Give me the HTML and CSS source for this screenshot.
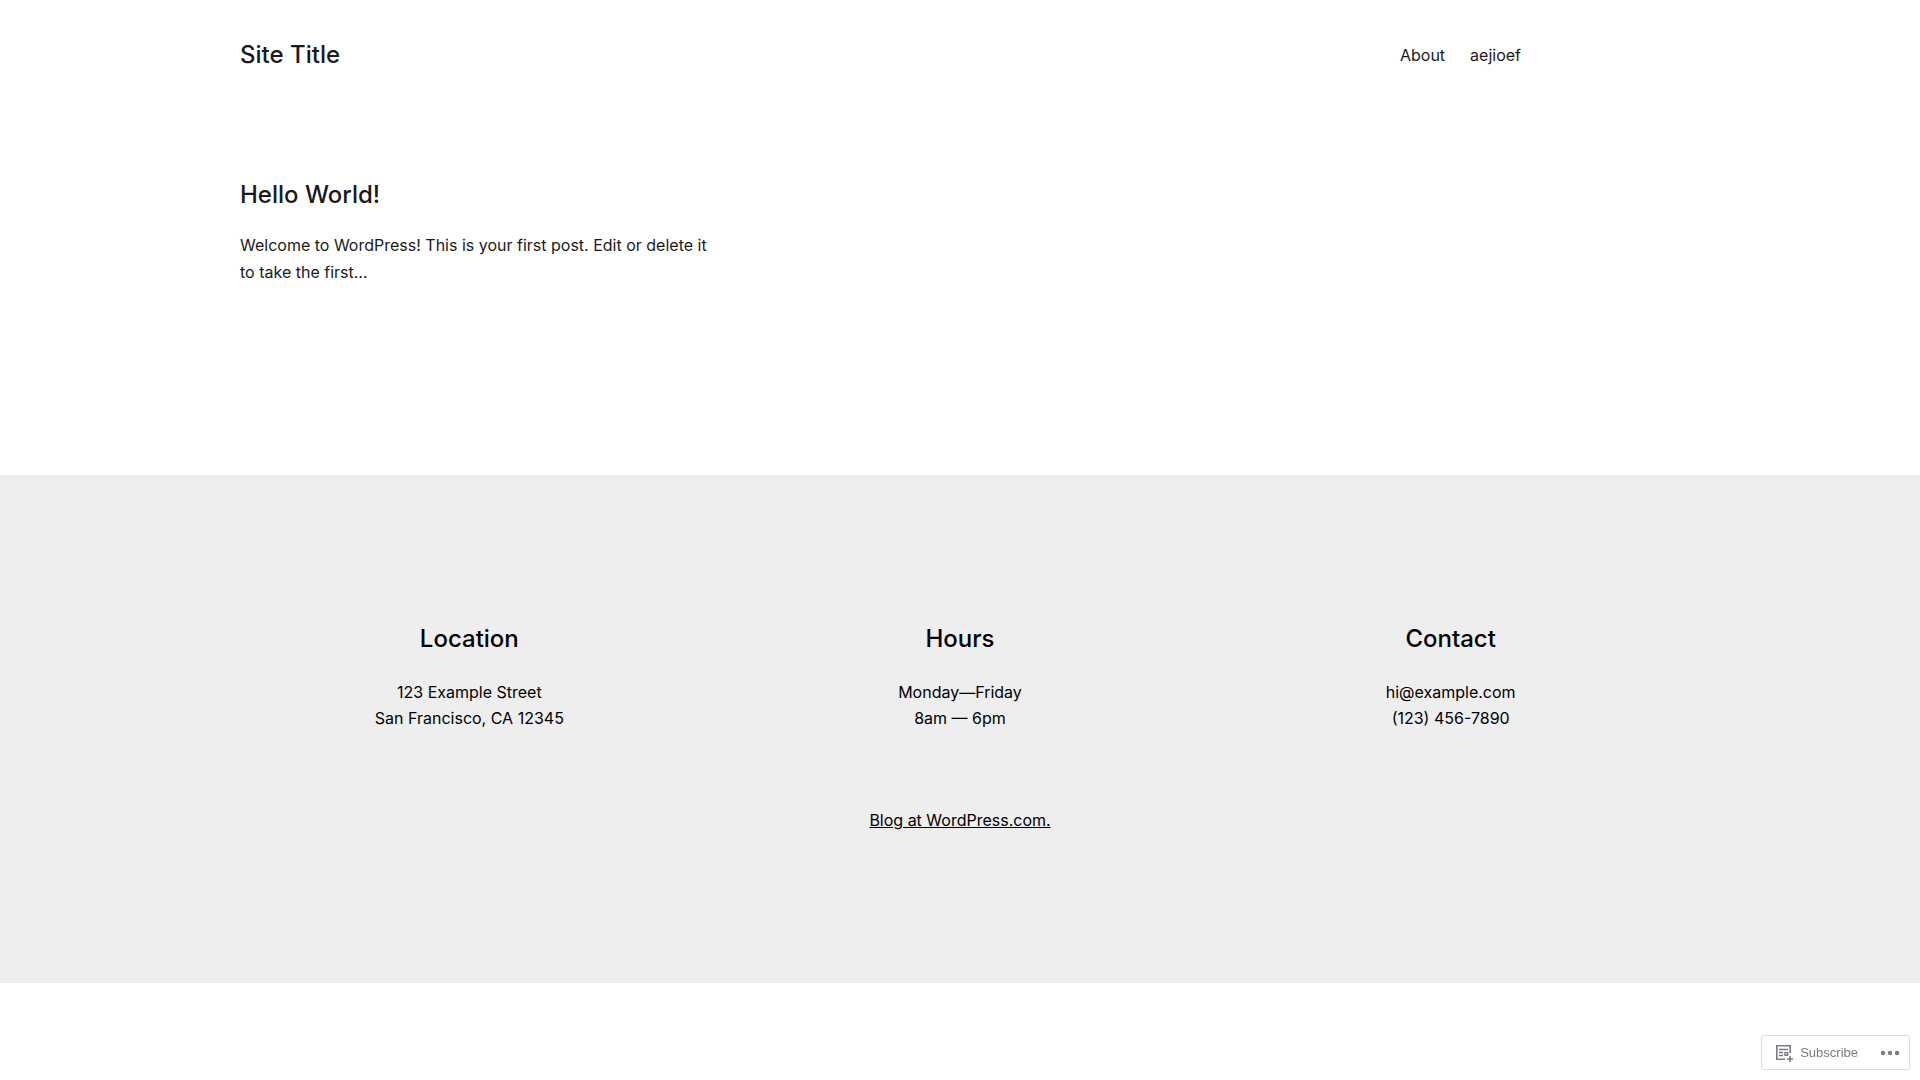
FILE: index.html
```
<!DOCTYPE html>
<html lang="en">
<head>
  <meta charset="UTF-8">
  <meta name="viewport" content="width=device-width, initial-scale=1">
  <title>Site Title</title>
  <link rel="stylesheet" href="styles.css">
</head>
<body>

<header class="site-header wrap">
  <a class="site-title" href="#">Site Title</a>
  <nav class="site-nav">
    <a href="#">About</a>
    <a href="#">aejioef</a>
  </nav>
</header>

<main class="posts wrap">
  <article class="post">
    <h2><a href="#">Hello World!</a></h2>
    <p>Welcome to WordPress! This is your first post. Edit or delete it to take the first…</p>
  </article>
</main>

<footer class="site-footer">
  <div class="footer-columns wrap">
    <section>
      <h2>Location</h2>
      <p>123 Example Street<br>San Francisco, CA 12345</p>
    </section>
    <section>
      <h2>Hours</h2>
      <p>Monday—Friday<br>8am — 6pm</p>
    </section>
    <section>
      <h2>Contact</h2>
      <p>hi@example.com<br>(123) 456-7890</p>
    </section>
  </div>
  <p class="credit"><a href="#">Blog at WordPress.com.</a></p>
</footer>

<div class="actionbar">
  <button class="subscribe" type="button">
    <svg width="20" height="20" viewBox="0 0 20 20" fill="none" stroke="currentColor">
      <path d="M16.2 10V2.8H2.8v13.4H11" stroke-width="1.6"/>
      <path d="M5 6.5h9M5 9.5h4M5 12.5h4" stroke-width="1.4"/>
      <path d="M11 9.6h2.6v2.6H11z" stroke-width="1.4"/>
      <path d="M16 13v6M13 16h6" stroke-width="1.6"/>
    </svg>
    Subscribe
  </button>
  <button class="more" type="button" aria-label="More">
    <svg width="20" height="6" viewBox="0 0 20 6" fill="currentColor">
      <circle cx="3" cy="3" r="2.2"/>
      <circle cx="10" cy="3" r="2.2"/>
      <circle cx="17" cy="3" r="2.2"/>
    </svg>
  </button>
</div>

</body>
</html>
```

FILE: styles.css
```
* {
  box-sizing: border-box;
}
body {
  margin: 0;
  background: #fff;
  color: #1a1a1a;
  font-family: Inter, sans-serif;
  font-size: 16px;
  line-height: 26px;
}
a {
  color: inherit;
  text-decoration: none;
}
h2 {
  margin: 0;
  font-size: 24px;
  font-weight: 500;
  line-height: 32px;
}
p {
  margin: 0;
}
.wrap {
  max-width: 1504px;
  margin: 0 auto;
  padding: 0 32px;
}
.site-header {
  display: flex;
  justify-content: space-between;
  align-items: center;
  padding-top: 39px;
  padding-right: 191px;
}
.site-title {
  font-size: 24px;
  font-weight: 500;
  line-height: 32px;
}
.site-nav {
  display: flex;
  gap: 25px;
}
.posts {
  display: grid;
  grid-template-columns: repeat(3, 1fr);
  padding-top: 108px;
  padding-bottom: 189px;
}
.post p {
  margin-top: 21px;
  line-height: 27px;
}
.site-footer {
  padding: 148px 0 150px;
  background: #eee;
  color: #000;
  text-align: center;
}
.footer-columns {
  display: grid;
  grid-template-columns: repeat(3, 1fr);
  gap: 32px;
}
.footer-columns p {
  margin-top: 24px;
}
.credit {
  margin-top: 76px;
}
.credit a {
  text-decoration: underline;
}
/* stays in the corner over the page */
.actionbar {
  position: fixed;
  right: 10px;
  bottom: 10px;
  display: flex;
  align-items: center;
  height: 35px;
  background: #fff;
  border: 1px solid #dcdcde;
  border-radius: 3px;
}
.actionbar button {
  display: flex;
  align-items: center;
  height: 100%;
  border: 0;
  background: none;
  color: #787c82;
  font-family: "Liberation Sans", sans-serif;
  font-size: 13px;
  cursor: pointer;
}
.subscribe {
  gap: 6px;
  padding: 0 13px 0 12px;
}
.more {
  padding: 0 9px;
}
```
